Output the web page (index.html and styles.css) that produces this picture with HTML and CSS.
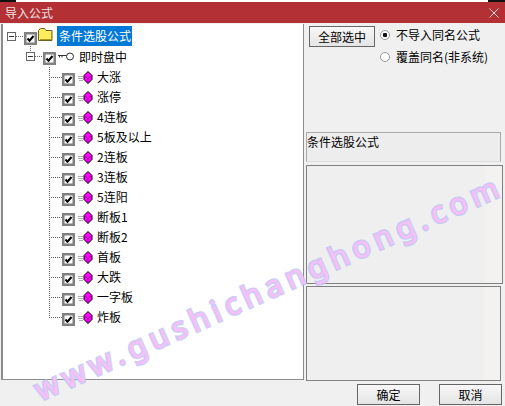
FILE: index.html
```html
<!DOCTYPE html>
<html>
<head>
    <title>导入公式</title>
    <meta charset="utf-8">
    <link rel="stylesheet" href="styles.css">
</head>
<body>
    <svg class="defs" width="0" height="0">
        <symbol id="check" viewBox="0 0 13 13">
            <rect x="1.250" y="1.250" width="10.500" height="10.500" fill="#fff" stroke="#808080" stroke-width="2.500"/>
            <path d="M3.500 6.500l2 2.200 4-4.700" fill="none" stroke="#000" stroke-width="2"/>
        </symbol>
        <symbol id="formula" viewBox="0 0 16 13">
            <path d="M1 5.500h5M1 7.500h5M2 9.500h4" stroke="#b0b0b0" fill="none"/>
            <path d="M11 .5l4 4v4l-4 4-4-4v-4z" fill="#f0f" stroke="#000"/>
            <path d="M7 4.500l4 3 4-3M11 7.500v5" fill="none" stroke="#800080" stroke-width=".7"/>
        </symbol>
    </svg>

    <div class="topstrip"></div>
    <div class="titlebar">
        <span>导入公式</span>
        <svg class="close" width="10" height="10" viewBox="0 0 10 10"><path d="M.5.5l9 9M9.5.5l-9 9" stroke="#f0d8d8" fill="none"/></svg>
    </div>

    <div class="main">
        <div class="tree">
            <div class="root-row">
                <span class="expander"></span>
                <span class="dots"></span>
                <svg class="box"><use href="#check"/></svg>
                <svg class="folder" width="15" height="13" viewBox="0 0 15 13">
                    <path d="M.5 12.500v-10l2-2h4l1.500 2h6v10z" fill="#ffec5c" stroke="#6b6420"/>
                    <path d="M13 4h1v8H2v-1h11z" fill="#a89a20"/>
                </svg>
                <span class="selected">条件选股公式</span>
            </div>
            <div class="group-row">
                <span class="expander"></span>
                <span class="dots"></span>
                <svg class="box"><use href="#check"/></svg>
                <svg class="key" width="16" height="9" viewBox="0 0 16 9">
                    <path d="M0 3.500h9M1.500 3.500v2M4 3.500v2" stroke="#333" fill="none"/>
                    <circle cx="12" cy="4.500" r="3.500" fill="#fff" stroke="#333"/>
                </svg>
                <span class="label">即时盘中</span>
            </div>
            <ul class="leaves">
                <li><span class="elbow"></span><svg class="box"><use href="#check"/></svg><svg class="gem"><use href="#formula"/></svg><span class="label">大涨</span></li>
                <li><span class="elbow"></span><svg class="box"><use href="#check"/></svg><svg class="gem"><use href="#formula"/></svg><span class="label">涨停</span></li>
                <li><span class="elbow"></span><svg class="box"><use href="#check"/></svg><svg class="gem"><use href="#formula"/></svg><span class="label">4连板</span></li>
                <li><span class="elbow"></span><svg class="box"><use href="#check"/></svg><svg class="gem"><use href="#formula"/></svg><span class="label">5板及以上</span></li>
                <li><span class="elbow"></span><svg class="box"><use href="#check"/></svg><svg class="gem"><use href="#formula"/></svg><span class="label">2连板</span></li>
                <li><span class="elbow"></span><svg class="box"><use href="#check"/></svg><svg class="gem"><use href="#formula"/></svg><span class="label">3连板</span></li>
                <li><span class="elbow"></span><svg class="box"><use href="#check"/></svg><svg class="gem"><use href="#formula"/></svg><span class="label">5连阳</span></li>
                <li><span class="elbow"></span><svg class="box"><use href="#check"/></svg><svg class="gem"><use href="#formula"/></svg><span class="label">断板1</span></li>
                <li><span class="elbow"></span><svg class="box"><use href="#check"/></svg><svg class="gem"><use href="#formula"/></svg><span class="label">断板2</span></li>
                <li><span class="elbow"></span><svg class="box"><use href="#check"/></svg><svg class="gem"><use href="#formula"/></svg><span class="label">首板</span></li>
                <li><span class="elbow"></span><svg class="box"><use href="#check"/></svg><svg class="gem"><use href="#formula"/></svg><span class="label">大跌</span></li>
                <li><span class="elbow"></span><svg class="box"><use href="#check"/></svg><svg class="gem"><use href="#formula"/></svg><span class="label">一字板</span></li>
                <li><span class="elbow last"></span><svg class="box"><use href="#check"/></svg><svg class="gem"><use href="#formula"/></svg><span class="label">炸板</span></li>
            </ul>
        </div>

        <div class="side">
            <div class="options">
                <button class="btn select-all">全部选中</button>
                <div class="radios">
                    <div class="radio-row"><span class="radio on"></span>不导入同名公式</div>
                    <div class="radio-row"><span class="radio"></span>覆盖同名(非系统)</div>
                </div>
            </div>
            <div class="name-box">条件选股公式</div>
            <div class="panel panel-top"></div>
            <div class="panel panel-bottom"></div>
        </div>
    </div>

    <div class="footer">
        <button class="btn action">确定</button>
        <button class="btn action">取消</button>
    </div>

    <div class="watermark">www.gushichanghong.com</div>
</body>
</html>
```

FILE: styles.css
```css
html, body {
    margin: 0;
    padding: 0;
}

body {
    width: 505px;
    height: 406px;
    overflow: hidden;
    position: relative;
    background: #f0f0f0;
    color: #000;
    font-family: "Noto Sans CJK SC", "Liberation Sans", sans-serif;
    font-size: 12px;
    line-height: 20px;
}

.defs {
    display: block;
    height: 0;
}

.topstrip {
    height: 2px;
    background: linear-gradient(to right, #111 16px, #fff 16px, #fff 488px, #111 488px);
}

.titlebar {
    height: 21px;
    background: #b33035;
    color: #f0e4e4;
    display: flex;
    align-items: center;
    justify-content: space-between;
    padding: 0 6px 0 5px;
}

.main {
    display: flex;
    height: 356px;
    margin-top: 1px;
}

/* tree */
.tree {
    width: 300px;
    margin-left: 1px;
    background: #fff;
    border: 1px solid #8c8c8c;
    border-left-width: 2px;
    border-top: 0;
    padding-top: 2px;
    height: 353px;
}

.root-row, .group-row, .leaves li {
    display: flex;
    align-items: center;
    height: 20px;
}

.root-row {
    padding-left: 4px;
    background: repeating-linear-gradient(to bottom, #666 0 1px, transparent 1px 2px) 27px 100% / 1px 2px no-repeat;
}

.group-row {
    height: 21px;
    padding-left: 23px;
    background: repeating-linear-gradient(to bottom, #666 0 1px, transparent 1px 2px) 27px 0 / 1px 6px no-repeat;
}

.expander {
    width: 9px;
    height: 9px;
    box-sizing: border-box;
    border: 1px solid #666;
    background: linear-gradient(#333, #333) center / 5px 1px no-repeat #fff;
}

.dots {
    width: 8px;
    height: 1px;
    background: repeating-linear-gradient(to right, #666 0 1px, transparent 1px 2px);
}

.box {
    width: 13px;
    height: 13px;
    margin-top: 4px;
    flex: none;
}

.folder {
    margin: -4px 0 0 1px;
}

.selected {
    background: #0078d7;
    color: #fff;
    margin-left: 4px;
    padding: 0 1px 0 2px;
    height: 20px;
}

.key {
    margin-left: 2px;
}

.group-row .label {
    margin-left: 5px;
}

.leaves {
    list-style: none;
    margin: 0;
    padding: 0 0 0 46px;
}

.elbow {
    width: 13px;
    height: 20px;
    flex: none;
    background-image:
        repeating-linear-gradient(to bottom, #666 0 1px, transparent 1px 2px),
        repeating-linear-gradient(to right, #666 0 1px, transparent 1px 2px);
    background-size: 1px 100%, 100% 1px;
    background-position: 0 0, 0 10px;
    background-repeat: no-repeat;
}

.elbow.last {
    background-size: 1px 10px, 100% 1px;
}

.gem {
    width: 16px;
    height: 13px;
    margin-left: 2px;
    flex: none;
}

.leaves .label {
    margin-left: 4px;
}

/* right side */
.side {
    flex: 1;
    padding-left: 2px;
}

.options {
    display: flex;
    height: 108px;
}

.btn {
    font: inherit;
    color: #000;
    padding: 0;
    border: 1px solid #666;
    background: linear-gradient(#f8f8f8, #e4e4e4);
}

.select-all {
    width: 66px;
    height: 21px;
    margin: 2px 0 0 3px;
}

.radios {
    margin-left: 5px;
}

.radio-row {
    display: flex;
    align-items: center;
    height: 22px;
    white-space: nowrap;
}

.radio {
    width: 10px;
    height: 10px;
    box-sizing: border-box;
    margin-right: 6px;
    border-radius: 50%;
    border: 1px solid #999;
    background: #fff;
}

.radio.on {
    background: radial-gradient(circle, #111 0 2px, #fff 2.500px);
}

.name-box {
    width: 193px;
    height: 28px;
    border: 1px solid #aaa;
    border-bottom-color: #ddd;
    line-height: 18px;
    background: #ededed;
}

.panel {
    box-sizing: border-box;
    border: 1px solid #808080;
    background: linear-gradient(to right, #efefef calc(100% - 17px), #f3f2f0 0);
}

.panel-top {
    width: 197px;
    height: 119px;
    margin-top: 3px;
}

.panel-bottom {
    width: 195px;
    height: 95px;
    margin-top: 2px;
}

.footer {
    display: flex;
    justify-content: flex-end;
    gap: 19px;
    padding: 4px 3px 0 0;
}

.action {
    width: 63px;
    height: 21px;
}

.watermark {
    position: absolute;
    left: 36px;
    top: 366px;
    transform: rotate(-24deg);
    transform-origin: left center;
    white-space: nowrap;
    pointer-events: none;
    font-family: "Noto Sans", sans-serif;
    font-size: 30px;
    line-height: 50px;
    letter-spacing: 5.700px;
    color: rgba(255, 190, 248, 0.9);
    -webkit-text-stroke: 3px rgba(195, 195, 245, 0.85);
    paint-order: stroke fill;
}
```
